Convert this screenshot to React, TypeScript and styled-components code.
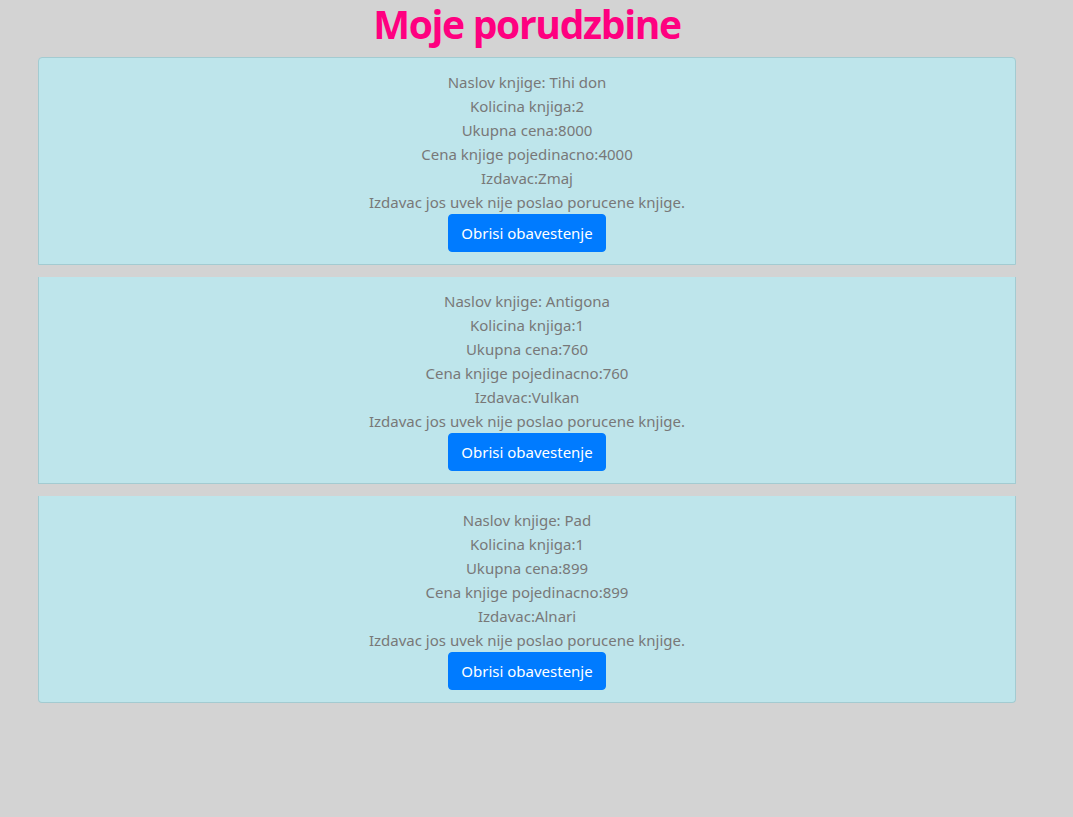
import React from "react";
import styled, { createGlobalStyle } from "styled-components";

const GlobalStyle = createGlobalStyle`
  *, *::before, *::after {
    box-sizing: border-box;
  }
  html, body {
    margin: 0;
    padding: 0;
    background: #d3d3d3;
  }
  body {
    font-family: "Noto Sans", "Open Sans", sans-serif;
    font-size: 16px;
    line-height: 24px;
  }
`;

const Page = styled.div`
  width: 978px;
  margin-left: 38px;
`;

const Title = styled.h1`
  margin: 0 0 9px;
  height: 48px;
  line-height: 48px;
  text-align: center;
  font-family: "Open Sans", sans-serif;
  font-weight: 700;
  font-size: 39px;
  letter-spacing: -1.3px;
  color: #ff0080;
`;

const List = styled.div`
  display: flex;
  flex-direction: column;
  gap: 12px;
`;

const Item = styled.div<{ $first?: boolean; $last?: boolean }>`
  background: #bee5eb;
  border: 1px solid #a3cbd1;
  border-top-width: ${(p) => (p.$first ? "1px" : "0")};
  border-radius: ${(p) =>
    p.$first ? "4px 4px 0 0" : p.$last ? "0 0 4px 4px" : "0"};
  padding: 12px 20px;
  display: flex;
  flex-direction: column;
  align-items: center;
  text-align: center;
  color: #787878;
`;

const Line = styled.div`
  font-size: 15px;
  line-height: 24px;
`;

const Button = styled.button`
  font-family: inherit;
  font-size: 15px;
  line-height: 24px;
  height: 38px;
  min-width: 156px;
  padding: 6px 12px;
  border: 1px solid #007bff;
  border-radius: 4px;
  background: #007bff;
  color: #fff;
  white-space: nowrap;
  cursor: pointer;
`;

type Order = {
  title: string;
  qty: number;
  total: number;
  price: number;
  publisher: string;
};

const orders: Order[] = [
  { title: "Tihi don", qty: 2, total: 8000, price: 4000, publisher: "Zmaj" },
  { title: "Antigona", qty: 1, total: 760, price: 760, publisher: "Vulkan" },
  { title: "Pad", qty: 1, total: 899, price: 899, publisher: "Alnari" },
];

export default function App() {
  return (
    <>
      <GlobalStyle />
      <Page>
        <Title>Moje porudzbine</Title>
        <List>
          {orders.map((o, i) => (
            <Item key={i} $first={i === 0} $last={i === orders.length - 1}>
              <Line>Naslov knjige: {o.title}</Line>
              <Line>Kolicina knjiga:{o.qty}</Line>
              <Line>Ukupna cena:{o.total}</Line>
              <Line>Cena knjige pojedinacno:{o.price}</Line>
              <Line>Izdavac:{o.publisher}</Line>
              <Line>Izdavac jos uvek nije poslao porucene knjige.</Line>
              <Button>Obrisi obavestenje</Button>
            </Item>
          ))}
        </List>
      </Page>
    </>
  );
}
